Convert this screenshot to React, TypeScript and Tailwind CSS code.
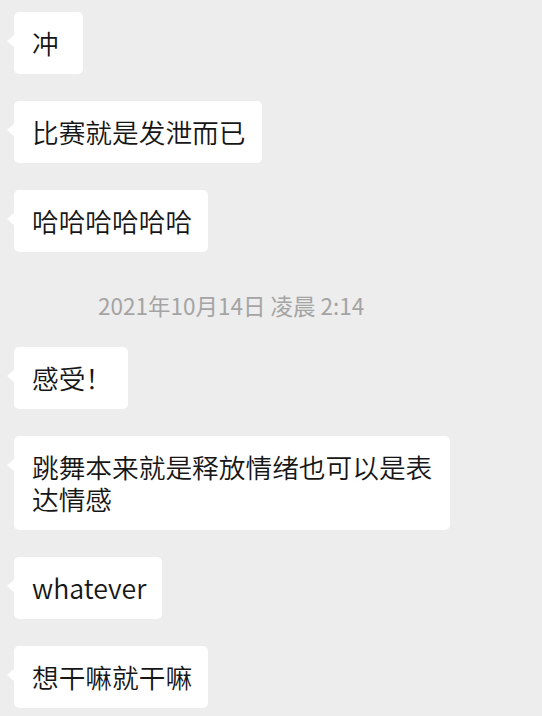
import React from "react";

type Item = { kind: "msg"; text: string } | { kind: "time"; text: string };

const items: Item[] = [
  { kind: "msg", text: "冲" },
  { kind: "msg", text: "比赛就是发泄而已" },
  { kind: "msg", text: "哈哈哈哈哈哈" },
  { kind: "time", text: "2021年10月14日 凌晨 2:14" },
  { kind: "msg", text: "感受！" },
  { kind: "msg", text: "跳舞本来就是释放情绪也可以是表达情感" },
  { kind: "msg", text: "whatever" },
  { kind: "msg", text: "想干嘛就干嘛" },
];

function Bubble({ text }: { text: string }) {
  return (
    <div className="flex pl-[14px]">
      <div className="relative min-w-[69px] max-w-[436px] rounded-[5px] bg-white pl-[18px] pr-[16px] py-[15px] text-[26.7px] leading-[32px] font-[350] text-[#161616]">
        {/* tail */}
        <span className="absolute left-[-7px] top-[22px] h-0 w-0 border-y-[7px] border-r-[8px] border-y-transparent border-r-white" />
        {text}
      </div>
    </div>
  );
}

export default function App() {
  return (
    <div
      className="min-h-[716px] w-[542px] overflow-hidden bg-[#ededed] pt-[12px]"
      style={{ fontFamily: '"Noto Sans CJK SC", "Noto Sans", sans-serif' }}
    >
      <div className="flex flex-col gap-[27px]">
        {items.map((it, i) =>
          it.kind === "msg" ? (
            <Bubble key={i} text={it.text} />
          ) : (
            <div key={i} className="mt-[11px] pl-[98px] text-[22.5px] leading-[30px] font-normal text-[#a4a4a4]">
              {it.text}
            </div>
          )
        )}
      </div>
    </div>
  );
}
